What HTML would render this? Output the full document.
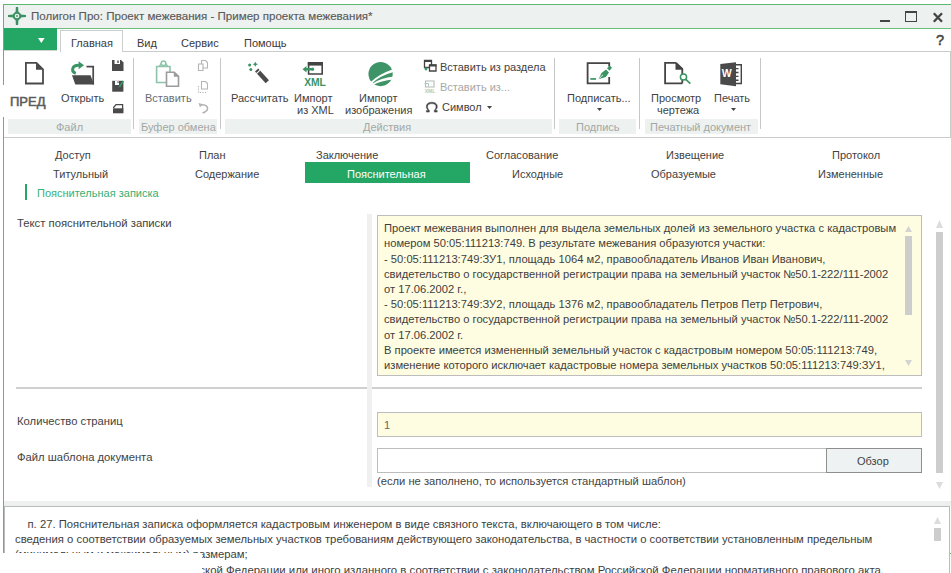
<!DOCTYPE html>
<html><head><meta charset="utf-8">
<style>
*{margin:0;padding:0;box-sizing:border-box}
html,body{width:951px;height:573px;overflow:hidden;background:#fff;font-family:"Liberation Sans",sans-serif;font-size:11px;color:#424242}
.a{position:absolute;white-space:nowrap}
.t{position:absolute;white-space:nowrap;line-height:13px}
#win{position:absolute;left:3px;top:4px;width:960px;height:550px;border:1px solid #5fb86f;border-right:none;background:#fff}
</style></head><body>
<div id="win"></div>
<!-- title bar -->
<div class="a" style="left:4px;top:5px;width:947px;height:23px;background:#edf1ef"></div>
<div class="a" style="left:4px;top:28px;width:947px;height:1px;background:#6cbf7a"></div>
<svg class="a" style="left:7px;top:6.3px" width="20" height="20" viewBox="0 0 20 20">
<circle cx="10" cy="10" r="3.3" stroke="#3a9162" stroke-width="2" fill="none"/>
<path d="M8.9 1H11.1L11.5 6.8H8.5ZM8.9 19H11.1L11.5 13.2H8.5ZM1 8.9V11.1L6.8 11.5V8.5ZM19 8.9V11.1L13.2 11.5V8.5Z" fill="#3a9162"/>
<circle cx="10" cy="10" r="0.9" fill="#3a9162"/></svg>
<div class="t" style="left:31px;top:9.8px;font-size:11.55px;color:#5a5a5a;-webkit-text-stroke:0.15px #5a5a5a">Полигон Про: Проект межевания - Пример проекта межевания*</div>
<!-- window buttons -->
<div class="a" style="left:880px;top:20px;width:10px;height:2px;background:#444"></div>
<div class="a" style="left:905px;top:11px;width:12px;height:11px;border:1.5px solid #444;border-top-width:2px"></div>
<svg class="a" style="left:932px;top:12px" width="11" height="11" viewBox="0 0 11 11"><path d="M1.8 1.3L10 9.7M10 1.3L1.8 9.7" stroke="#444" stroke-width="2.3"/></svg>

<!-- green file button + tabs -->
<div class="a" style="left:4px;top:28px;width:53px;height:22px;background:#24a665"></div>
<div class="a" style="left:4px;top:50px;width:53px;height:1px;background:#cfd6d2"></div>
<svg class="a" style="left:38px;top:38px" width="7" height="5" viewBox="0 0 7 5"><path d="M0 0H6.6L3.3 5Z" fill="#fff"/></svg>
<div class="a" style="left:60px;top:30px;width:63px;height:22px;background:#fff;border:1px solid #c9cfcc;border-bottom:none"></div>
<div class="t" style="left:71px;top:36.8px;color:#3a3a3a">Главная</div>
<div class="t" style="left:137px;top:36.8px;color:#3a3a3a">Вид</div>
<div class="t" style="left:181px;top:36.8px;color:#3a3a3a">Сервис</div>
<div class="t" style="left:244px;top:36.8px;color:#3a3a3a">Помощь</div>
<div class="a" style="left:936px;top:32px;font-size:14.5px;-webkit-text-stroke:0.5px #444;color:#444;line-height:16px">?</div>
<div class="a" style="left:950px;top:51px;width:1px;height:87px;background:#c8cccb"></div>
<!-- ribbon border -->
<div class="a" style="left:123px;top:51px;width:828px;height:1px;background:#c8cccb"></div>
<div class="a" style="left:4px;top:137px;width:947px;height:1px;background:#c8cccb"></div>

<!-- ribbon separators -->
<div class="a" style="left:133px;top:58px;width:1px;height:71px;background:#c6c8c7"></div>
<div class="a" style="left:220px;top:58px;width:1px;height:71px;background:#c6c8c7"></div>
<div class="a" style="left:554px;top:58px;width:1px;height:71px;background:#c6c8c7"></div>
<div class="a" style="left:639px;top:58px;width:1px;height:71px;background:#c6c8c7"></div>
<div class="a" style="left:760px;top:58px;width:1px;height:71px;background:#c6c8c7"></div>
<!-- group label bands -->
<div class="a" style="left:8px;top:119px;width:123px;height:15px;background:#edf2f0"></div>
<div class="a" style="left:139px;top:119px;width:78px;height:15px;background:#edf2f0"></div>
<div class="a" style="left:225px;top:119px;width:327px;height:15px;background:#edf2f0"></div>
<div class="a" style="left:559px;top:119px;width:77px;height:15px;background:#edf2f0"></div>
<div class="a" style="left:645px;top:119px;width:113px;height:15px;background:#edf2f0"></div>
<div class="t" style="left:56px;top:121px;color:#a3a7a5">Файл</div>
<div class="t" style="left:141px;top:121px;color:#a3a7a5">Буфер обмена</div>
<div class="t" style="left:363px;top:121px;color:#a3a7a5">Действия</div>
<div class="t" style="left:576px;top:121px;color:#a3a7a5">Подпись</div>
<div class="t" style="left:650px;top:121px;color:#a3a7a5">Печатный документ</div>
<!-- ribbon labels -->
<div class="a" style="left:3px;top:85px;width:2px;height:32px;background:#fff"></div>
<div class="t" style="left:10px;top:94.5px;font-size:13px;-webkit-text-stroke:0.55px #5c5c5c;color:#5c5c5c">ПРЕД</div>
<div class="t" style="left:61px;top:91.6px">Открыть</div>
<div class="t" style="left:145px;top:91.6px;color:#6b6e70">Вставить</div>
<div class="t" style="left:231px;top:91.6px">Рассчитать</div>
<div class="t" style="left:294px;top:91.6px">Импорт</div>
<div class="t" style="left:297px;top:104px">из XML</div>
<div class="t" style="left:359px;top:91.6px">Импорт</div>
<div class="t" style="left:345px;top:104px">изображения</div>
<div class="t" style="left:440px;top:61px">Вставить из раздела</div>
<div class="t" style="left:440px;top:81px;color:#a5a8a7">Вставить из...</div>
<div class="t" style="left:442px;top:101px">Символ</div>
<svg class="a" style="left:487px;top:106px" width="5" height="3"><path d="M0 0H5L2.5 3Z" fill="#444"/></svg>
<div class="t" style="left:567px;top:91.6px">Подписать...</div>
<svg class="a" style="left:597px;top:108px" width="5" height="3"><path d="M0 0H5L2.5 3Z" fill="#444"/></svg>
<div class="t" style="left:651px;top:91.6px">Просмотр</div>
<div class="t" style="left:657px;top:104px">чертежа</div>
<div class="t" style="left:714px;top:91.6px">Печать</div>
<svg class="a" style="left:731px;top:108px" width="5" height="3"><path d="M0 0H5L2.5 3Z" fill="#444"/></svg>

<!-- icons -->
<svg class="a" style="left:24px;top:61px" width="21" height="25" viewBox="0 0 21 25">
<path d="M1.9 1.9H12.4L19 8.4V22.5H1.9Z" fill="#fff" stroke="#4a4a4a" stroke-width="1.8" stroke-linejoin="miter"/>
<path d="M12 1.2V8.8H19.6Z" fill="#4a4a4a"/></svg>
<svg class="a" style="left:68px;top:58px" width="28" height="28" viewBox="0 0 28 28">
<path d="M18.5 8.7H25.2V26.5" fill="none" stroke="#4a4a4a" stroke-width="1.7"/>
<path d="M4 17.3H22.5L26 26.5H7.3Z" fill="#4a4a4a"/>
<path d="M7.8 15.3C3.2 14 3.2 7.4 10.5 7.2H11.5" fill="none" stroke="#3a9463" stroke-width="2.9"/>
<path d="M10.6 3.2L16 7.2L10.6 11.2Z" fill="#3a9463"/></svg>
<svg class="a" style="left:111px;top:59px" width="14" height="56" viewBox="0 0 14 56">
<path d="M1 1H10L12.5 3.5V12H1Z" fill="#4a4a4a"/><path d="M3.5 1H9V5H3.5Z" fill="#fff"/><path d="M6.3 1.5H7.7V4H6.3Z" fill="#4a4a4a"/>
<path d="M1.2 21.8H12.4V32.7H1.2Z" fill="#4a4a4a"/><path d="M4 21.8H8V26H4Z" fill="#fff"/><path d="M6.5 22.2H7.6V24H6.5Z" fill="#4a4a4a"/>
<path d="M7.6 27.5L11.6 21.5L13 22.6L9.2 28.2Z" fill="#3a9463"/><path d="M7.2 28.4L8.8 26.4L9.6 27.6Z" fill="#3a9463"/>
<path d="M2.6 49V48.5L5 45.6H11.6V54" fill="none" stroke="#4a4a4a" stroke-width="1.3"/>
<path d="M2 49.3H12.3V54.3H2Z" fill="#4a4a4a"/></svg>
<svg class="a" style="left:154px;top:59px" width="27" height="29" viewBox="0 0 27 29">
<path d="M2.6 7.5H16V23.5H2.6Z" fill="#fff" stroke="#8fc4ab" stroke-width="1.6"/>
<path d="M5.5 7.5L7 5H12L13.5 7.5" fill="none" stroke="#8fc4ab" stroke-width="1.6"/>
<circle cx="9.5" cy="4.3" r="2.3" fill="#fff" stroke="#8fc4ab" stroke-width="1.5"/>
<path d="M12.5 13.3H20.2L24.5 17.3V27.2H12.5Z" fill="#fff" stroke="#9c9c9c" stroke-width="1.6"/>
<path d="M19.8 12.5V17.8H25.2Z" fill="#9c9c9c"/></svg>
<svg class="a" style="left:197px;top:59px" width="12" height="56" viewBox="0 0 12 56">
<path d="M4.5 1.5H8.5L10.5 3.5V9H4.5Z" fill="#fff" stroke="#b4b4b4" stroke-width="1.1"/>
<path d="M1.5 5H6V11.5H1.5Z" fill="#fff" stroke="#b4b4b4" stroke-width="1.1"/>
<path d="M4.5 22.5H8.5L10.5 24.5V30H4.5Z" fill="#fff" stroke="#b4b4b4" stroke-width="1.1"/>
<path d="M1.5 27V33.5H10" fill="none" stroke="#b4b4b4" stroke-width="1.1" stroke-dasharray="1.2 1.4"/>
<path d="M3 46.5C7 44.5 11 47 10.5 50C10 52.5 7 53.5 5.5 54" fill="none" stroke="#b4b4b4" stroke-width="1.5"/>
<path d="M1.5 44L5.5 45L3 48.5Z" fill="#b4b4b4"/></svg>
<svg class="a" style="left:244px;top:58px" width="26" height="28" viewBox="0 0 26 28">
<path d="M14 13.6L23.3 23.8" stroke="#4a4a4a" stroke-width="4.4"/>
<path d="M13.3 12.8L14.6 14.2" stroke="#fff" stroke-width="5"/>
<path d="M12.6 12L13.9 13.4" stroke="#4a4a4a" stroke-width="4.4"/>
<path d="M11.3 3.8L12.3 5.6L14 6.3L12.3 7L11.3 8.8L10.3 7L8.6 6.3L10.3 5.6Z" fill="#3a9463"/>
<circle cx="5.6" cy="7" r="1.5" fill="#3a9463"/><circle cx="6.8" cy="11.5" r="1.5" fill="#3a9463"/></svg>
<svg class="a" style="left:301px;top:60px" width="28" height="28" viewBox="0 0 28 28">
<path d="M7.6 2.9H21.2V14H7.6Z" fill="#fff" stroke="#444" stroke-width="1.6"/>
<path d="M6.8 2H22V5.6H6.8Z" fill="#444"/>
<path d="M5 9.2H12.5" stroke="#3a9463" stroke-width="2.4"/>
<path d="M1.5 9.2L5.5 6L5.5 12.4Z" fill="#3a9463"/>
<circle cx="11.5" cy="9.2" r="1.6" fill="#3a9463"/>
<text x="14" y="26" text-anchor="middle" font-family="Liberation Sans" font-weight="bold" font-size="10.3" fill="#3a9463">XML</text></svg>
<svg class="a" style="left:364px;top:58px" width="34" height="32" viewBox="0 0 609 573">
<circle cx="297" cy="287" r="217" fill="#3e9466"/>
<path d="M120 430 Q260 290 530 196 L530 252 Q280 320 150 452 Z" fill="#fff"/>
<path d="M150 460 Q300 358 530 332 L530 386 Q300 410 165 485 Z" fill="#fff"/></svg>
<svg class="a" style="left:422px;top:59px" width="16" height="56" viewBox="0 0 16 56">
<path d="M2.5 1.5H9.5V8.5H2.5Z" fill="#fff" stroke="#444" stroke-width="1.3"/><path d="M2 1H10V3H2Z" fill="#444"/>
<path d="M7.5 6H14V12H7.5Z" fill="#fff" stroke="#444" stroke-width="1.3"/><path d="M7 5.5H14.5V7.5H7Z" fill="#444"/>
<circle cx="4" cy="10" r="1.4" fill="#3a9463"/>
<path d="M3.5 22H12V28H3.5Z" fill="#fff" stroke="#b6bab8" stroke-width="1.1"/>
<path d="M2.5 24.5H6.5V27.5" fill="none" stroke="#a9cdb9" stroke-width="1"/>
<text x="8" y="33.5" text-anchor="middle" font-family="Liberation Sans" font-weight="bold" font-size="5" fill="#a9cdb9">XML</text>
<g transform="translate(1.8 0.9)"><path d="M5.5 52.2H2.6V50.6H4.6C3 49.4 2.5 47.9 2.5 46.6C2.5 44 4.5 42.3 8 42.3C11.5 42.3 13.5 44 13.5 46.6C13.5 47.9 13 49.4 11.4 50.6H13.4V52.2H10.5V50.3C11.8 49.2 12.2 47.9 12.2 46.8C12.2 44.9 10.6 43.7 8 43.7C5.4 43.7 3.8 44.9 3.8 46.8C3.8 47.9 4.2 49.2 5.5 50.3Z" fill="#444" stroke="#444" stroke-width="0.5"/></g></svg>
<svg class="a" style="left:585px;top:60px" width="28" height="26" viewBox="0 0 28 26">
<path d="M24.2 6.5V3.1H2.6V23.4H24.2V17" fill="none" stroke="#444" stroke-width="1.8"/>
<path d="M5.3 18.1H11V19.8H5.3Z" fill="#3a9463"/>
<path d="M13.5 19.2L16.5 13L21 9.6L24 12.6L20.8 17Z" fill="#3a9463"/>
<path d="M22 8.2L24.8 5.6L27 7.8L24.5 10.7Z" fill="#3a9463"/>
<path d="M14.2 18.5L18 14.8" stroke="#fff" stroke-width="0.9"/></svg>
<svg class="a" style="left:663px;top:60px" width="30" height="26" viewBox="0 0 30 26">
<path d="M13 2.8H2.1V23.4H19.3" fill="none" stroke="#444" stroke-width="1.8"/>
<path d="M13 2.8L19.3 9V14.5" fill="none" stroke="#444" stroke-width="1.8"/>
<path d="M12.5 1.9V9.7H20.2Z" fill="#444"/>
<path d="M19.3 20V23.4" stroke="#444" stroke-width="1.8"/>
<circle cx="20.5" cy="17" r="3.1" fill="#fff" stroke="#3a9463" stroke-width="1.5"/>
<path d="M22.8 19.3L27.3 23.6" stroke="#3a9463" stroke-width="1.6"/></svg>
<svg class="a" style="left:719px;top:61px" width="24" height="27" viewBox="0 0 24 27">
<path d="M15.7 3.7H22.3V22.5H15.7" fill="#fff" stroke="#444" stroke-width="1.4"/>
<path d="M17 7.6H19.5M17 11.5H19.5M17 15.4H19.5M17 19.2H19.5" stroke="#444" stroke-width="1.4"/>
<path d="M1.3 2.9L17 1.2V25.2L1.3 23.3Z" fill="#4a4a4a"/>
<text x="7.6" y="15.8" text-anchor="middle" font-family="Liberation Sans" font-weight="bold" font-size="10.5" fill="#fff">W</text></svg>

<!-- section nav -->
<div class="t" style="left:55px;top:149px">Доступ</div>
<div class="t" style="left:199px;top:149px">План</div>
<div class="t" style="left:316px;top:149px">Заключение</div>
<div class="t" style="left:486px;top:149px">Согласование</div>
<div class="t" style="left:666px;top:149px">Извещение</div>
<div class="t" style="left:832px;top:149px">Протокол</div>
<div class="t" style="left:53px;top:168px">Титульный</div>
<div class="t" style="left:195px;top:168px">Содержание</div>
<div class="a" style="left:305px;top:162px;width:165px;height:21px;background:#24a665"></div>
<div class="t" style="left:347px;top:168px;color:#fff">Пояснительная</div>
<div class="t" style="left:512px;top:168px">Исходные</div>
<div class="t" style="left:651px;top:168px">Образуемые</div>
<div class="t" style="left:818px;top:168px">Измененные</div>
<div class="a" style="left:25px;top:184px;width:2px;height:16px;background:#24a665"></div>
<div class="t" style="left:37px;top:187px;color:#36b074">Пояснительная записка</div>
<!-- form -->
<div class="t" style="left:17px;top:216.8px;font-size:11.3px">Текст пояснительной записки</div>
<div class="a" style="left:367px;top:214px;width:5px;height:273px;background:#f0f0f0"></div>
<div class="a" style="left:377px;top:215px;width:545px;height:161px;background:#fffde1;border:1px solid #bdbdbd"></div>
<div class="a" style="left:384px;top:221.2px;line-height:15.2px;font-size:11.2px;color:#3e3e3e;white-space:pre">Проект межевания выполнен для выдела земельных долей из земельного участка с кадастровым
номером 50:05:111213:749. В результате межевания образуются участки:
- 50:05:111213:749:ЗУ1, площадь 1064 м2, правообладатель Иванов Иван Иванович,
свидетельство о государственной регистрации права на земельный участок №50.1-222/111-2002
от 17.06.2002 г.,
- 50:05:111213:749:ЗУ2, площадь 1376 м2, правообладатель Петров Петр Петрович,
свидетельство о государственной регистрации права на земельный участок №50.1-222/111-2002
от 17.06.2002 г.
В проекте имеется измененный земельный участок с кадастровым номером 50:05:111213:749,
изменение которого исключает кадастровые номера земельных участков 50:05:111213:749:ЗУ1,</div>
<svg class="a" style="left:905px;top:226px" width="8" height="6"><path d="M0 6H7L3.5 0Z" fill="#d3d3d3"/></svg>
<div class="a" style="left:905px;top:236px;width:7px;height:79px;background:#cdcdcd"></div>
<svg class="a" style="left:905px;top:360px" width="8" height="6"><path d="M0 0H7L3.5 6Z" fill="#d3d3d3"/></svg>
<div class="a" style="left:16px;top:387px;width:351px;height:2px;background:#cfcfcf"></div>
<div class="a" style="left:372px;top:387px;width:550px;height:2px;background:#cfcfcf"></div>
<div class="t" style="left:17px;top:414.5px;font-size:11.25px">Количество страниц</div>
<div class="a" style="left:377px;top:412px;width:545px;height:25px;background:#fffde1;border:1px solid #bdbdbd"></div>
<div class="t" style="left:384px;top:418.5px;color:#666">1</div>
<div class="t" style="left:17px;top:450.5px;font-size:11.25px">Файл шаблона документа</div>
<div class="a" style="left:377px;top:448px;width:450px;height:25px;background:#fff;border:1px solid #bdbdbd"></div>
<div class="a" style="left:826px;top:448px;width:96px;height:25px;background:#eef2f2;border:1px solid #8e8e8e"></div>
<div class="t" style="left:857px;top:454.8px">Обзор</div>
<div class="t" style="left:377px;top:474.5px;font-size:11.2px">(если не заполнено, то используется стандартный шаблон)</div>
<!-- outer scrollbar -->
<svg class="a" style="left:936px;top:220px" width="8" height="8"><path d="M0 8H7L3.5 0Z" fill="#dcdcdc"/></svg>
<div class="a" style="left:936px;top:232px;width:7px;height:241px;background:#cdcdcd"></div>
<svg class="a" style="left:936px;top:482px" width="8" height="8"><path d="M0 0H7L3.5 7Z" fill="#dcdcdc"/></svg>
<!-- bottom panel -->
<div class="a" style="left:4px;top:501px;width:947px;height:5px;background:#eef0f0"></div>
<div class="a" style="left:4px;top:506px;width:946px;height:67px;background:#fff;border:1px solid #b9bcbd;border-bottom:none"></div>
<div class="a" style="left:15px;top:516.5px;line-height:15.2px;font-size:11.28px;color:#3e3e3e;white-space:pre">    п. 27. Пояснительная записка оформляется кадастровым инженером в виде связного текста, включающего в том числе:
сведения о соответствии образуемых земельных участков требованиям действующего законодательства, в частности о соответствии установленным предельным
(минимальным и максимальным) размерам;</div>
<div class="a" style="right:67px;top:562.5px;line-height:15.2px;font-size:11.4px;color:#3e3e3e;white-space:pre">Российской Федерации или иного изданного в соответствии с законодательством Российской Федерации нормативного правового акта.</div>
<svg class="a" style="left:934px;top:517px" width="8" height="8"><path d="M0 7H7L3.5 0Z" fill="#dcdcdc"/></svg>
<div class="a" style="left:934px;top:528px;width:7px;height:13px;background:#cdcdcd"></div>
<div class="a" style="left:0;top:553px;width:202px;height:20px;background:#fff"></div>
</body></html>
